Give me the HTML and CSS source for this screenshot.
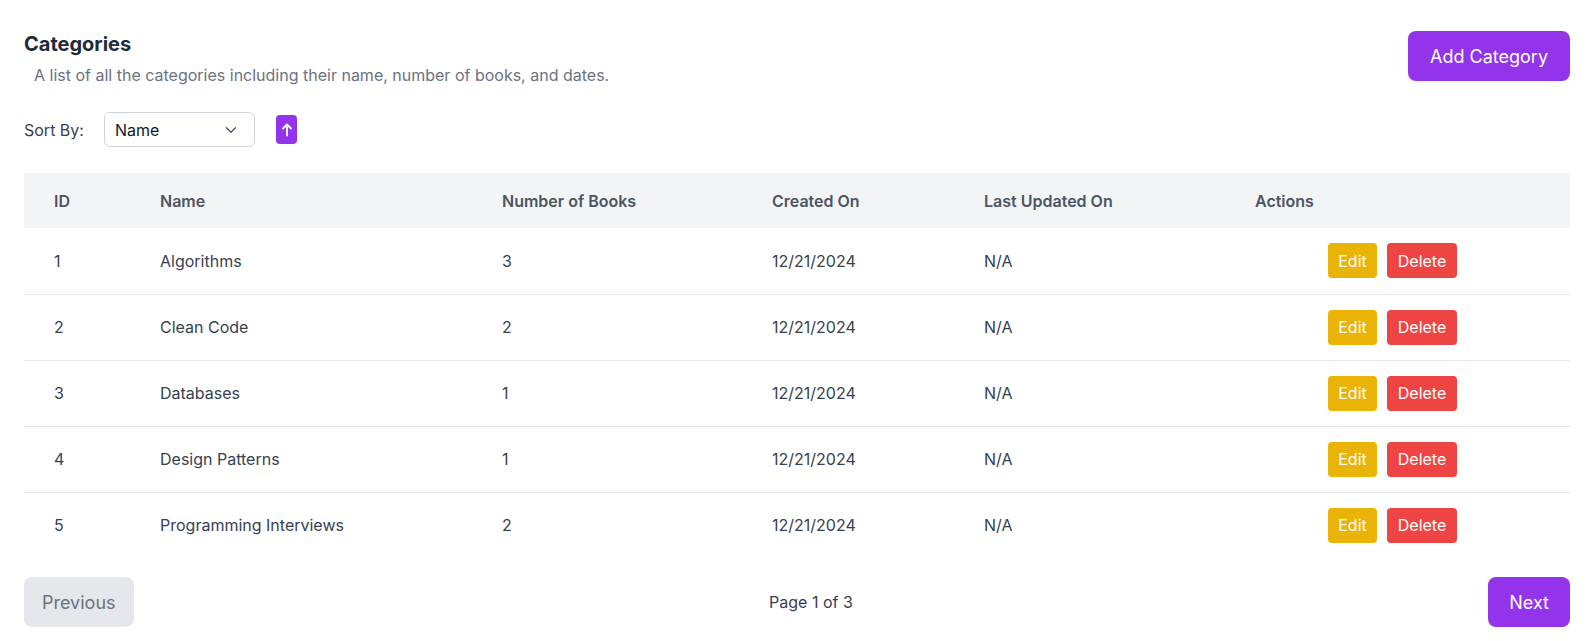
FILE: index.html
```html
<!DOCTYPE html>
<html lang="en">
<head>
<meta charset="utf-8">
<title>Categories</title>
<link rel="stylesheet" href="styles.css">
</head>
<body>
<div class="page">
  <div class="header">
    <div class="titles">
      <h2 class="title">Categories</h2>
      <p class="subtitle">A list of all the categories including their name, number of books, and dates.</p>
    </div>
    <button class="btn btn-primary btn-lg">Add Category</button>
  </div>

  <div class="sort-row">
    <span class="sort-label">Sort By:</span>
    <div class="select">
      <span>Name</span>
      <svg class="chev" width="18" height="18" viewBox="0 0 24 24" fill="none" stroke="currentColor" stroke-width="1.8" stroke-linecap="round" stroke-linejoin="round"><path d="M6 9l6 6 6-6"/></svg>
    </div>
    <button class="sort-dir">
      <svg width="12" height="14" viewBox="0 0 12 14" fill="none" stroke="#fff" stroke-width="1.8" stroke-linecap="round" stroke-linejoin="round"><path d="M6 12.5V1.8"/><path d="M2 5.5L6 1.5l4 4"/></svg>
    </button>
  </div>

  <table class="table">
    <colgroup>
      <col class="c-id"><col class="c-name"><col class="c-num"><col class="c-created"><col class="c-updated"><col class="c-actions">
    </colgroup>
    <thead>
      <tr><th>ID</th><th>Name</th><th>Number of Books</th><th>Created On</th><th>Last Updated On</th><th>Actions</th></tr>
    </thead>
    <tbody>
      <tr><td>1</td><td>Algorithms</td><td>3</td><td>12/21/2024</td><td>N/A</td><td><div class="actions"><button class="btn-sm edit">Edit</button><button class="btn-sm del">Delete</button></div></td></tr>
      <tr><td>2</td><td>Clean Code</td><td>2</td><td>12/21/2024</td><td>N/A</td><td><div class="actions"><button class="btn-sm edit">Edit</button><button class="btn-sm del">Delete</button></div></td></tr>
      <tr><td>3</td><td>Databases</td><td>1</td><td>12/21/2024</td><td>N/A</td><td><div class="actions"><button class="btn-sm edit">Edit</button><button class="btn-sm del">Delete</button></div></td></tr>
      <tr><td>4</td><td>Design Patterns</td><td>1</td><td>12/21/2024</td><td>N/A</td><td><div class="actions"><button class="btn-sm edit">Edit</button><button class="btn-sm del">Delete</button></div></td></tr>
      <tr><td>5</td><td>Programming Interviews</td><td>2</td><td>12/21/2024</td><td>N/A</td><td><div class="actions"><button class="btn-sm edit">Edit</button><button class="btn-sm del">Delete</button></div></td></tr>
    </tbody>
  </table>

  <div class="pager">
    <button class="btn btn-disabled btn-lg btn-prev">Previous</button>
    <span class="page-info">Page 1 of 3</span>
    <button class="btn btn-primary btn-lg">Next</button>
  </div>
</div>
</body>
</html>
```
FILE: styles.css
```css
* { box-sizing: border-box; }
body {
  margin: 0;
  background: #ffffff;
  font-family: "Inter", "Lato", sans-serif;
  color: #374151;
}
.page {
  padding: 30px 18px 0 24px;
}
.header {
  display: flex;
  justify-content: space-between;
  align-items: flex-start;
}
.title {
  margin: 0;
  font-size: 20px;
  line-height: 28px;
  font-weight: 700;
  color: #1f2937;
}
.subtitle {
  margin: 5px 0 0 10px;
  font-size: 16px;
  line-height: 24px;
  color: #6b7280;
}
.btn {
  border: none;
  font-family: inherit;
  cursor: pointer;
}
.btn-lg {
  height: 50px;
  padding: 0 21px;
  font-size: 18px;
  border-radius: 8px;
}
.btn-prev { padding: 0 18px; }
.header .btn-lg { margin-top: 1px; padding: 0 22px; }
.btn-primary { background: #9333ea; color: #ffffff; }
.btn-disabled { background: #e5e7eb; color: #6b7280; }

.sort-row {
  display: flex;
  align-items: center;
  margin-top: 25px;
  height: 35px;
}
.sort-label {
  font-size: 16px;
  color: #374151;
  width: 80px;
}
.select {
  width: 151px;
  height: 35px;
  border: 1px solid #d1d5db;
  border-radius: 6px;
  display: flex;
  align-items: center;
  justify-content: space-between;
  padding: 0 14px 0 10px;
  font-size: 16px;
  color: #111827;
}
.chev { color: #4b5563; }
.sort-dir {
  margin-left: 21px;
  width: 21px;
  height: 29px;
  border: none;
  border-radius: 4px;
  background: #9333ea;
  display: flex;
  align-items: center;
  justify-content: center;
  padding: 0;
}

.table {
  margin-top: 26px;
  width: 100%;
  border-collapse: collapse;
  table-layout: fixed;
}
.c-id { width: 106px; }
.c-name { width: 342px; }
.c-num { width: 270px; }
.c-created { width: 212px; }
.c-updated { width: 271px; }
.c-actions { width: auto; }
thead tr { background: #f3f4f6; }
th {
  height: 55px;
  text-align: left;
  padding: 0 0 0 30px;
  font-size: 16px;
  font-weight: 600;
  color: #4b5563;
}
td {
  height: 66px;
  padding: 0 0 0 30px;
  font-size: 16px;
  color: #374151;
  border-bottom: 1px solid #e5e7eb;
}
tbody tr:last-child td { border-bottom: none; }
.actions {
  display: flex;
  gap: 10px;
  justify-content: center;
  padding-right: 40px;
}
.btn-sm {
  border: none;
  height: 35px;
  padding: 0;
  border-radius: 4px;
  font-family: inherit;
  font-size: 16px;
  color: #ffffff;
}
.edit { background: #eab308; width: 49px; }
.del { background: #ef4444; width: 70px; }

.pager {
  margin-top: 19px;
  display: flex;
  justify-content: space-between;
  align-items: center;
}
.page-info {
  font-size: 16px;
  color: #374151;
}
```
